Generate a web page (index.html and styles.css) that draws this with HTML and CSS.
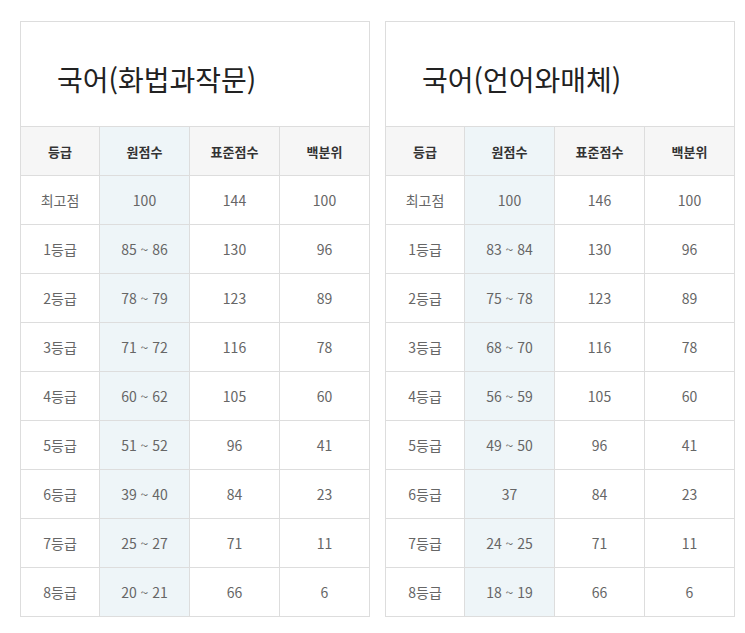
FILE: index.html
```html
<!DOCTYPE html>
<html lang="ko">
<head>
<meta charset="utf-8">
<link rel="stylesheet" href="styles.css">
</head>
<body>
<div class="wrap">
  <table class="grade">
    <colgroup><col class="c1"><col class="c2"><col class="c3"><col class="c4"></colgroup>
    <thead>
      <tr class="title-row"><th colspan="4" class="title">국어(화법과작문)</th></tr>
      <tr class="head"><th>등급</th><th class="raw">원점수</th><th>표준점수</th><th>백분위</th></tr>
    </thead>
    <tbody>
      <tr><td>최고점</td><td class="raw">100</td><td>144</td><td>100</td></tr>
      <tr><td>1등급</td><td class="raw">85 ~ 86</td><td>130</td><td>96</td></tr>
      <tr><td>2등급</td><td class="raw">78 ~ 79</td><td>123</td><td>89</td></tr>
      <tr><td>3등급</td><td class="raw">71 ~ 72</td><td>116</td><td>78</td></tr>
      <tr><td>4등급</td><td class="raw">60 ~ 62</td><td>105</td><td>60</td></tr>
      <tr><td>5등급</td><td class="raw">51 ~ 52</td><td>96</td><td>41</td></tr>
      <tr><td>6등급</td><td class="raw">39 ~ 40</td><td>84</td><td>23</td></tr>
      <tr><td>7등급</td><td class="raw">25 ~ 27</td><td>71</td><td>11</td></tr>
      <tr><td>8등급</td><td class="raw">20 ~ 21</td><td>66</td><td>6</td></tr>
    </tbody>
  </table>
  <table class="grade">
    <colgroup><col class="c1"><col class="c2"><col class="c3"><col class="c4"></colgroup>
    <thead>
      <tr class="title-row"><th colspan="4" class="title">국어(언어와매체)</th></tr>
      <tr class="head"><th>등급</th><th class="raw">원점수</th><th>표준점수</th><th>백분위</th></tr>
    </thead>
    <tbody>
      <tr><td>최고점</td><td class="raw">100</td><td>146</td><td>100</td></tr>
      <tr><td>1등급</td><td class="raw">83 ~ 84</td><td>130</td><td>96</td></tr>
      <tr><td>2등급</td><td class="raw">75 ~ 78</td><td>123</td><td>89</td></tr>
      <tr><td>3등급</td><td class="raw">68 ~ 70</td><td>116</td><td>78</td></tr>
      <tr><td>4등급</td><td class="raw">56 ~ 59</td><td>105</td><td>60</td></tr>
      <tr><td>5등급</td><td class="raw">49 ~ 50</td><td>96</td><td>41</td></tr>
      <tr><td>6등급</td><td class="raw">37</td><td>84</td><td>23</td></tr>
      <tr><td>7등급</td><td class="raw">24 ~ 25</td><td>71</td><td>11</td></tr>
      <tr><td>8등급</td><td class="raw">18 ~ 19</td><td>66</td><td>6</td></tr>
    </tbody>
  </table>
</div>
</body>
</html>
```
FILE: styles.css
```css
html, body {
  margin: 0;
  padding: 0;
  background: #fff;
}
body {
  font-family: "Noto Sans CJK KR", "Noto Sans", sans-serif;
  color: #666;
}
.wrap {
  display: flex;
  gap: 15px;
  padding: 21px 0 0 20px;
}
.grade {
  border-collapse: collapse;
  table-layout: fixed;
  width: 350px;
  border: 1px solid #ddd;
}
.c1 { width: 79px; }
.c2 { width: 90px; }
.c3 { width: 90px; }
.c4 { width: 90px; }
.grade th, .grade td {
  border: 1px solid #ddd;
  text-align: center;
  vertical-align: middle;
  padding: 0;
  height: 48px;
  font-size: 14px;
}
.grade .title {
  height: 94px;
  text-align: left;
  padding: 10px 0 0 36px;
  font-size: 28px;
  font-weight: 400;
  color: #222;
  background: #fff;
}
.head th {
  background: #f6f6f6;
  color: #333;
  font-weight: 700;
  font-size: 13px;
}
.grade .raw {
  background: #eef5f8;
}
```
